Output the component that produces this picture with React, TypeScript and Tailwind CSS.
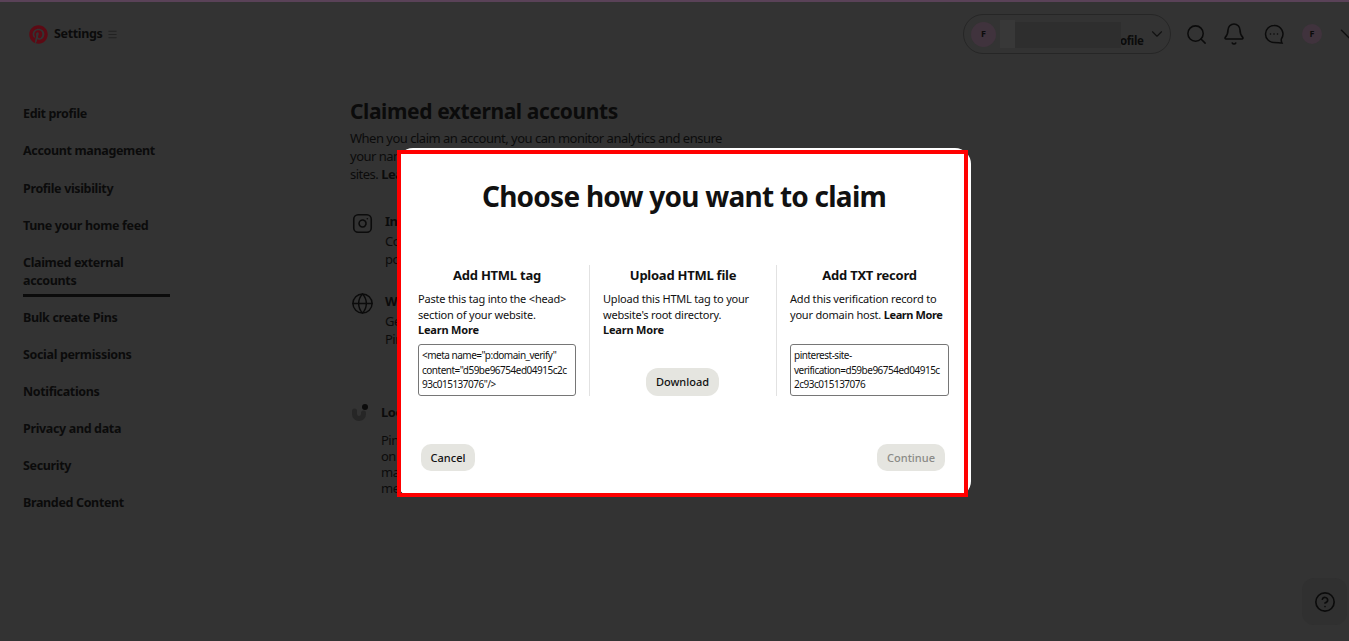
import { Bell, ChevronDown, CircleHelp, Globe, Instagram, Menu, Search } from 'lucide-react';
import { FaPinterest } from 'react-icons/fa';

const navItems = [
  'Edit profile',
  'Account management',
  'Profile visibility',
  'Tune your home feed',
  'Claimed external accounts',
  'Bulk create Pins',
  'Social permissions',
  'Notifications',
  'Privacy and data',
  'Security',
  'Branded Content',
];

function ChatIcon() {
  return (
    <svg width="20" height="20" viewBox="0 0 20 20" fill="none" stroke="#0b0b0b" strokeWidth="1.5">
      <path d="M10 1.500a8.500 8.500 0 1 0 0 17c2 0 5 .4 8 .6-.8-1.600-.9-3-.6-4.300A8.500 8.500 0 0 0 10 1.500z" />
      <circle cx="6.500" cy="10" r=".8" fill="#0b0b0b" stroke="none" />
      <circle cx="10" cy="10" r=".8" fill="#0b0b0b" stroke="none" />
      <circle cx="13.500" cy="10" r=".8" fill="#0b0b0b" stroke="none" />
    </svg>
  );
}

function LoopIcon() {
  return (
    <svg width="18" height="18" viewBox="0 0 18 18" fill="none" className="shrink-0">
      <path d="M4.500 8v3a4.500 4.500 0 0 0 9 0V10" stroke="#262626" strokeWidth="5" strokeLinecap="round" />
      <circle cx="15" cy="4" r="3" fill="#0b0b0b" />
    </svg>
  );
}

function Avatar({ size }: { size: string }) {
  return (
    <div className={`flex shrink-0 items-center justify-center rounded-full bg-[#40333d] text-[9px] font-bold text-[#0b0b0b] ${size}`}>
      F
    </div>
  );
}

function Header() {
  return (
    <header className="flex h-16 items-center justify-between">
      <div className="ml-[29px] flex items-center">
        <FaPinterest className="text-[19px] text-[#5c0a14]" />
        <span className="ml-[6px] mt-px text-[12.500px] font-bold tracking-[-0.35px] text-[#0b0b0b]">Settings</span>
        <Menu className="ml-[5px] text-[#1a1a1a]" size={11} strokeWidth={1.5} />
      </div>
      <div className="flex items-center">
        <div className="relative flex h-10 w-[208px] items-center rounded-full border border-[#262626] pl-[7px]">
          <Avatar size="h-[25px] w-[25px]" />
          <span className="ml-[124px] mt-[14px] text-[11.500px] font-bold tracking-[-0.4px] text-[#0b0b0b]">ofile</span>
          <ChevronDown className="ml-[5px] shrink-0 text-[#111]" size={18} strokeWidth={1.5} />
          <div className="absolute left-[36px] top-[5px] h-7 w-[15px] bg-[#383838]" />
          <div className="absolute left-[51px] top-[7px] h-[26px] w-[106px] bg-[#2e2e2e]" />
        </div>
        <Search className="ml-[14px] text-[#0b0b0b]" size={23} strokeWidth={1.600} />
        <Bell className="ml-[14px] text-[#0b0b0b]" size={24} strokeWidth={1.600} />
        <div className="ml-[18px]"><ChatIcon /></div>
        <div className="ml-[18px]"><Avatar size="h-5 w-5" /></div>
        <ChevronDown className="ml-[11.500px] mr-[-14.500px] shrink-0 text-[#111]" size={30} strokeWidth={1.2} />
      </div>
    </header>
  );
}

function Sidebar() {
  return (
    <nav className="ml-[23px] mt-[29.200px] w-[147px] shrink-0 text-[12.500px] font-bold tracking-[-0.35px] text-[#0b0b0b]">
      {navItems.map((item, idx) => {
        if (item === 'Claimed external accounts') {
          return (
            <div key={item} className="mb-[2px] border-b-[3px] border-[#0b0b0b] pb-1 pt-[10px] leading-[18px]">
              {item}
            </div>
          );
        }
        return (
          <div key={item} className={idx > 4 ? 'py-[9px] leading-[19px]' : 'py-[9px] leading-[19.200px]'}>
            {item}
          </div>
        );
      })}
    </nav>
  );
}

function Claims() {
  return (
    <main className="ml-[180px] mt-[33px] w-[400px] text-[13px] leading-[18px] tracking-[-0.5px] text-[#0b0b0b]">
      <h1 className="text-[21px] font-bold leading-6 tracking-[-0.4px]">Claimed external accounts</h1>
      <p className="mt-[6px]">
        When you claim an account, you can monitor analytics and ensure
        <br />
        your name and profile are attached to your
        <br />
        sites. <b>Learn more</b>
      </p>
      <div className="mt-[29px] flex pl-[2px]">
        <Instagram className="mt-px shrink-0" size={21} strokeWidth={1.8} />
        <div className="ml-3">
          <div className="font-bold">Instagram</div>
          <p className="mt-[2px]">
            Connect your account to see analytics
            <br />
            posted from it
          </p>
        </div>
      </div>
      <div className="mt-6 flex pl-px">
        <Globe className="shrink-0" size={23} strokeWidth={1.500} />
        <div className="ml-[11px]">
          <div className="font-bold">Website</div>
          <p className="mt-[2px]">
            Get analytics for the Pins published from
            <br />
            Pinterest and your site
          </p>
        </div>
      </div>
      <div className="mt-[55px] flex">
        <LoopIcon />
        <div className="ml-[13px]">
          <div className="font-bold">Loop</div>
          <p className="mt-[11px] leading-4">
            Pinterest partners with Loop
            <br />
            on measuring your content and
            <br />
            making it easier to
            <br />
            measure results
          </p>
        </div>
      </div>
    </main>
  );
}

function ClaimBox({ children }: { children: React.ReactNode }) {
  return (
    <div className="h-[52px] whitespace-nowrap rounded-[3px] border border-[#767676] py-[3px] pl-[3px] pr-1 text-[10px] leading-[14.500px] tracking-[-0.5px] text-[#111]">
      {children}
    </div>
  );
}

function ClaimModal() {
  const heading = 'text-center text-[13px] font-bold leading-[19px] tracking-[-0.25px] text-[#111]';
  const body = 'mt-[6px] h-[47px] text-[11px] leading-[15.500px] tracking-[-0.2px] text-[#111]';
  return (
    <div className="absolute left-[397px] top-[146px] h-[349px] w-[574px] rounded-2xl bg-white">
      <div className="absolute left-0 top-[2px] h-[347px] w-[571px] border-4 border-[#ff0000]" />
      <div className="flex h-full flex-col px-[21px] pb-[26px] pt-7">
        <h2 className="text-center text-[28px] font-bold leading-10 tracking-[-0.75px] text-[#111]">Choose how you want to claim</h2>
        <div className="mt-[50px] grid grid-cols-[172px_187px_172px]">
          <section className="-mt-px h-[131px] border-r border-[#e2e2e2] pr-[13px] pt-px">
            <h3 className={heading}>Add HTML tag</h3>
            <p className={body}>
              Paste this tag into the &lt;head&gt; section of your website. <b className="block">Learn More</b>
            </p>
            <div className="mt-[6px]">
              <ClaimBox>
                &lt;meta name="p:domain_verify"
                <br />
                content="d59be96754ed04915c2c
                <br />
                93c015137076"/&gt;
              </ClaimBox>
            </div>
          </section>
          <section className="-mt-px h-[131px] border-r border-[#e2e2e2] px-[13px] pt-px">
            <h3 className={heading}>Upload HTML file</h3>
            <p className={body}>
              Upload this HTML tag to your website's root directory. <b className="block">Learn More</b>
            </p>
            <div className="mt-[30px] flex justify-center pr-px">
              <button className="h-7 w-[73px] rounded-xl bg-[#e5e5e0] text-[11px] font-medium text-[#111]">Download</button>
            </div>
          </section>
          <section className="-mt-px h-[131px] pl-[13px] pt-px">
            <h3 className={heading}>Add TXT record</h3>
            <p className={body}>
              Add this verification record to your domain host. <b className="tracking-[-0.4px]">Learn More</b>
            </p>
            <div className="mt-[6px]">
              <ClaimBox>
                pinterest-site-
                <br />
                verification=d59be96754ed04915c
                <br />
                2c93c015137076
              </ClaimBox>
            </div>
          </section>
        </div>
        <div className="mt-auto flex items-center justify-between pl-[3px] pr-[5px]">
          <button className="h-[27px] w-[54px] rounded-[10px] bg-[#e5e5e0] pt-px text-[11px] font-medium text-[#111]">Cancel</button>
          <button className="h-[27px] w-[68px] rounded-[10px] bg-[#e5e5e0] pt-px text-[11px] font-medium text-[#8a8a86]">Continue</button>
        </div>
      </div>
    </div>
  );
}

export default function App() {
  return (
    <div className="relative h-[641px] w-[1349px] overflow-hidden border-t-2 border-[#5a4258] bg-[#333333] font-['Noto_Sans',sans-serif]">
      <Header />
      <div className="flex">
        <Sidebar />
        <Claims />
      </div>
      <ClaimModal />
      <div className="absolute bottom-4 right-[2px] flex h-[47px] w-[45px] items-center justify-center rounded-xl bg-[#303030]">
        <CircleHelp className="text-[#0b0b0b]" size={22} strokeWidth={1.800} />
      </div>
    </div>
  );
}
